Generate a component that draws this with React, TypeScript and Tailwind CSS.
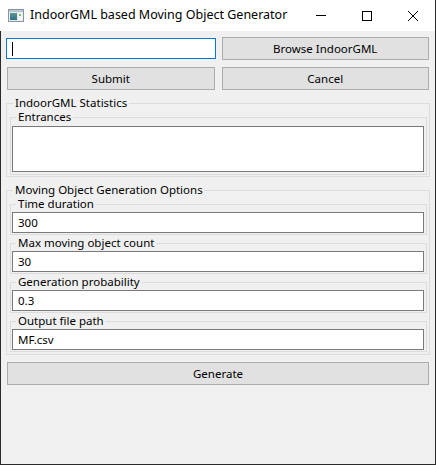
function Caret() {
  return <span className="block h-[14px] w-[1px] bg-black" />;
}

function Btn({ label }: { label: string }) {
  return (
    <button className="mx-[1px] flex h-[23px] items-center justify-center border border-[#adadad] bg-[#e1e1e1] text-[11.5px] text-black">
      {label}
    </button>
  );
}

function Field({ label, value }: { label: string; value: string }) {
  return (
    <fieldset className="ml-[3px] mr-[2px] border border-[#dcdcdc] pl-[1px] pr-[2px] pt-[1px] pb-[1px]">
      <legend className="ml-[4px] px-[2px] text-[11.5px] leading-[14px]">{label}</legend>
      <div className="flex h-[21px] items-center border border-[#7a7a7a] bg-white pl-[5px] text-[11.5px]">
        {value}
      </div>
    </fieldset>
  );
}

function AppIcon() {
  return (
    <svg width="16" height="13" viewBox="0 0 16 13" className="shrink-0">
      <defs>
        <linearGradient id="g" x1="0" y1="0" x2="0" y2="1">
          <stop offset="0" stopColor="#5a9a8c" />
          <stop offset="1" stopColor="#2f6f8f" />
        </linearGradient>
      </defs>
      <rect x="0.5" y="0.5" width="15" height="12" fill="#e8ecef" stroke="#8a96a0" />
      <rect x="1" y="1" width="14" height="2" fill="#b9c6d0" />
      <rect x="2" y="4" width="7" height="7" fill="url(#g)" />
      <rect x="10" y="4" width="4" height="7" fill="#f6f8f9" />
      <rect x="11" y="5" width="2" height="2" fill="#7bbf6a" />
    </svg>
  );
}

export default function App() {
  return (
    <div
      className="flex h-[465px] w-[436px] flex-col overflow-hidden border-r border-[#2b2b2b] bg-[#f0f0f0] text-black"
      style={{ fontFamily: '"Noto Sans", "Open Sans", sans-serif' }}
    >
      <div className="flex h-[31px] shrink-0 items-center bg-white">
        <div className="ml-[8px]">
          <AppIcon />
        </div>
        <span className="ml-[6px] text-[12.5px]">IndoorGML based Moving Object Generator</span>
        <div className="ml-auto flex h-full">
          <div className="flex w-[46px] items-center justify-center">
            <span className="block h-[1px] w-[10px] bg-black" />
          </div>
          <div className="flex w-[46px] items-center justify-center">
            <span className="block h-[10px] w-[10px] border border-black" />
          </div>
          <div className="flex w-[45px] items-center justify-center">
            <svg width="10" height="10" viewBox="0 0 10 10">
              <path d="M0 0L10 10M10 0L0 10" stroke="black" strokeWidth="1" />
            </svg>
          </div>
        </div>
      </div>

      <div className="flex flex-1 flex-col border-b border-l border-[#2b2b2b] pl-[5px] pr-[5px] pt-[5px]">
        <div className="grid h-[25px] grid-cols-2 items-center gap-x-[5px]">
          <div className="flex h-[21px] items-center border border-[#0078d7] bg-white pl-[5px]">
            <Caret />
          </div>
          <Btn label="Browse IndoorGML" />
        </div>
        <div className="mt-[5px] grid h-[25px] grid-cols-2 items-center gap-x-[5px]">
          <Btn label="Submit" />
          <Btn label="Cancel" />
        </div>

        <fieldset className="mt-[5px] border border-[#dcdcdc] pb-[1px]">
          <legend className="ml-[6px] px-[2px] text-[11.5px] leading-[14px]">IndoorGML Statistics</legend>
          <fieldset className="ml-[3px] mr-[2px] border border-[#dcdcdc] pl-[1px] pr-[2px] pt-[2px] pb-[2px]">
            <legend className="ml-[4px] px-[2px] text-[11.5px] leading-[14px]">Entrances</legend>
            <div className="h-[46px] border border-[#7a7a7a] bg-white" />
          </fieldset>
        </fieldset>

        <fieldset className="mt-[6px] flex flex-col gap-[1px] border border-[#dcdcdc] pb-[2px]">
          <legend className="ml-[6px] px-[2px] text-[11.5px] leading-[14px]">Moving Object Generation Options</legend>
          <Field label="Time duration" value="300" />
          <Field label="Max moving object count" value="30" />
          <Field label="Generation probability" value="0.3" />
          <Field label="Output file path" value="MF.csv" />
        </fieldset>

        <div className="mt-[6px] flex h-[25px] flex-col justify-center">
          <Btn label="Generate" />
        </div>
      </div>
    </div>
  );
}
